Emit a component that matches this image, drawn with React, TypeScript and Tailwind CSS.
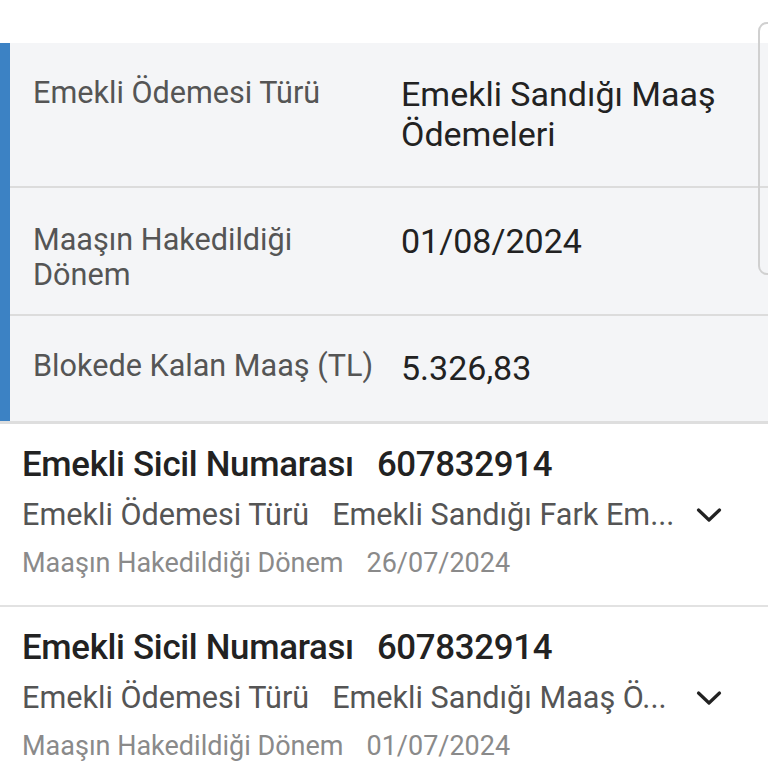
import React from "react";

const Chevron = () => (
  <svg width="26" height="16" viewBox="0 0 26 16" fill="none">
    <path d="M2.5 3 L13 13 L23.5 3" stroke="#222" strokeWidth="3.2" strokeLinecap="round" strokeLinejoin="round" />
  </svg>
);

function Item({ no, type, date }: { no: string; type: string; date: string }) {
  return (
    <div className="flex flex-col pl-[22px] pr-[46px] pt-[20px] pb-[18px] border-b-2 border-[#e2e2e2]">
      <div className="flex items-center h-[40px] text-[34.8px] font-medium text-[#222] tracking-[-0.3px] whitespace-nowrap">
        <span>Emekli Sicil Numarası</span>
        <span className="ml-[23px]">{no}</span>
      </div>
      <div className="flex items-center h-[48px] mt-[7px] text-[30.6px] text-[#555] whitespace-nowrap">
        <span className="shrink-0">Emekli Ödemesi Türü</span>
        <span className="ml-[23px] flex-1 overflow-hidden">{type}</span>
        <span className="ml-[10px] shrink-0 flex"><Chevron /></span>
      </div>
      <div className="flex items-center h-[48px] text-[27px] text-[#8a8a8a] whitespace-nowrap">
        <span>Maaşın Hakedildiği Dönem</span>
        <span className="ml-[23px]">{date}</span>
      </div>
    </div>
  );
}

export default function App() {
  return (
    <div className="relative w-[768px] h-[768px] overflow-hidden bg-white" style={{ fontFamily: "Roboto, 'Noto Sans', sans-serif" }}>
      <div className="h-[43px]" />
      <div className="flex bg-[#f4f5f7] border-b-[3px] border-[#dedede]">
        <div className="w-[10px] bg-[#3c82c4] shrink-0" />
        <div className="flex-1 flex flex-col">
          <div className="flex border-b-2 border-[#dcdcdc] h-[145px] pt-[30px]">
            <div className="w-[391px] pl-[23px] text-[30.6px] leading-[36px] text-[#555] whitespace-nowrap pt-[2px]">Emekli Ödemesi Türü</div>
            <div className="flex-1 text-[34px] leading-[40px] text-[#222] pt-[1px]">Emekli Sandığı Maaş<br />Ödemeleri</div>
          </div>
          <div className="flex border-b-2 border-[#dcdcdc] h-[128px] pt-[34px]">
            <div className="w-[391px] pl-[23px] text-[30.6px] leading-[35px] text-[#555]">Maaşın Hakedildiği<br />Dönem</div>
            <div className="flex-1 text-[34px] leading-[42px] text-[#222] -mt-[2px]">01/08/2024</div>
          </div>
          <div className="flex h-[105px] pt-[32px]">
            <div className="w-[391px] pl-[23px] text-[30.6px] leading-[36px] text-[#555] whitespace-nowrap">Blokede Kalan Maaş (TL)</div>
            <div className="flex-1 text-[34px] leading-[42px] text-[#222] -mt-[1px]">5.326,83</div>
          </div>
        </div>
      </div>
      <Item no="607832914" type="Emekli Sandığı Fark Em..." date="26/07/2024" />
      <Item no="607832914" type="Emekli Sandığı Maaş Ö..." date="01/07/2024" />
      <div className="absolute left-[758px] top-[22px] w-[30px] h-[253px] rounded-[9px] border-2 border-[#d0d0d0] bg-transparent" />
    </div>
  );
}
